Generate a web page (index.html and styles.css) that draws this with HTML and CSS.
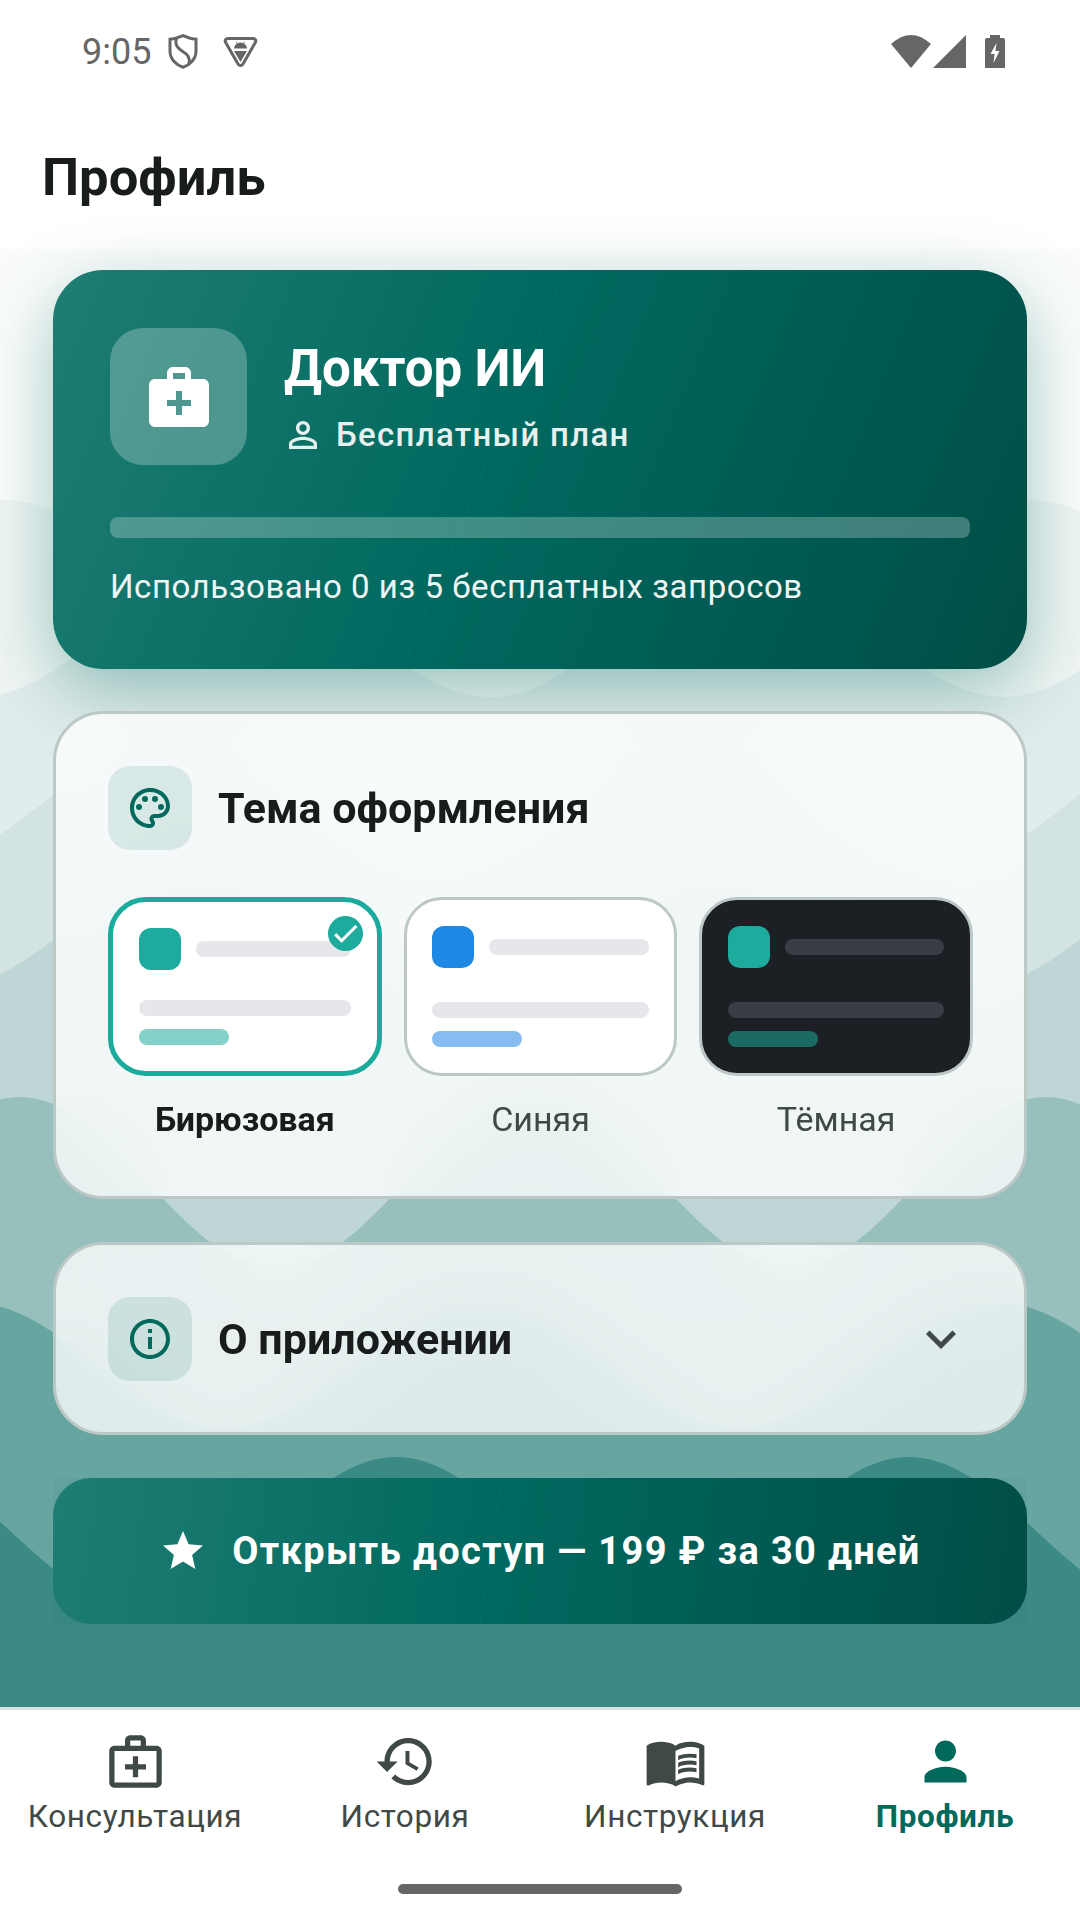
FILE: index.html
```html
<!doctype html>
<html lang="ru">

<head>
    <meta charset="utf-8">
    <title>Профиль</title>
    <link rel="stylesheet" href="styles.css">
</head>

<body>
    <div class="screen">
        <!-- status bar -->
        <div class="status">
            <span class="time">9:05</span>
            <svg class="st-shield" viewBox="0 0 30 35" fill="none" stroke="#666" stroke-width="3">
                <path d="M15 1.7C20 4 24.500 5 28 5.200V17C28 25 22 31 15 33.300 8 31 2 25 2 17V5.200C5.500 5 10 4 15 1.700Z" />
                <path d="M8.500 4C6.500 10 9 14 14 17S22.500 23 21 30" />
            </svg>
            <svg class="st-fdroid" viewBox="0 0 35 32" fill="#666">
                <path d="M5 2.500H30C32.500 2.500 33.500 4.500 32.300 6.500L20 28C18.800 30 16.200 30 15 28L2.700 6.500C1.500 4.500 2.500 2.500 5 2.500Z" fill="none" stroke="#666" stroke-width="3" />
                <path d="M11 12.500a6.500 6 0 0 1 13 0zM13 5l1.500 2-1 .6zM22 5l-1.500 2 1 .6zM11 15h13l-6.500 11z" />
            </svg>
            <span class="st-space"></span>
            <svg class="st-wifi" viewBox="0 0 40 33" fill="#666"><path d="M0 9Q20-9 40 9L20 33z" /></svg>
            <svg class="st-signal" viewBox="0 0 33 33" fill="#666"><path d="M33 0V33H0z" /></svg>
            <svg class="st-battery" viewBox="0 0 20 33">
                <path fill="#666" d="M5 0h10v3h3a2 2 0 0 1 2 2v28H0V5a2 2 0 0 1 2-2h3z" />
                <path fill="#fff" d="M11.500 8 5.500 19H9.500L8.500 28 14.500 16H10.500z" />
            </svg>
        </div>

        <h1 class="page-title">Профиль</h1>

        <main class="content">
            <!-- background waves, light to dark -->
            <svg class="waves" viewBox="0 249 1080 1458" preserveAspectRatio="none">
                <path class="w1" d="M-508 500c93.400 0 163 130 256.500 130s163-130 256.500-130 163 130 256.500 130 163-130 256.500-130 163 130 256.500 130 163-130 256.500-130 163 130 256.500 130 163-130 256.500-130V1707H-508z" />
                <path class="w2" d="M-279 566c93.400 0 163 131 256.500 131s163-131 256.500-131 163 131 256.500 131 163-131 256.500-131 163 131 256.500 131 163-131 256.500-131 163 131 256.500 131 163-131 256.500-131V1707H-279z" />
                <path class="w3" d="M-334.500 732c93.400 0 163 130 256.500 130s163-130 256.500-130 163 130 256.500 130 163-130 256.500-130 163 130 256.500 130 163-130 256.500-130 163 130 256.500 130 163-130 256.500-130V1707H-334.500z" />
                <path class="w4" d="M-308.500 857c93.400 0 163 130 256.500 130s163-130 256.500-130 163 130 256.500 130 163-130 256.500-130 163 130 256.500 130 163-130 256.500-130 163 130 256.500 130 163-130 256.500-130V1707H-308.500z" />
                <path class="w5" d="M-493 1097c93.400 0 163 172 256.500 172s163-172 256.500-172 163 172 256.500 172 163-172 256.500-172 163 172 256.500 172 163-172 256.500-172 163 172 256.500 172 163-172 256.500-172V1707H-493z" />
                <path class="w6" d="M-31 1302c93.400 0 163 125 256.500 125s163-125 256.500-125 163 125 256.500 125 163-125 256.500-125 163 125 256.500 125 163-125 256.500-125V1707H-31z" />
                <path class="w7" d="M-117 1457c93.400 0 163 150 256.500 150s163-150 256.500-150 163 150 256.500 150 163-150 256.500-150 163 150 256.500 150 163-150 256.500-150V1707H-117z" />
            </svg>

            <!-- plan card -->
            <section class="plan">
                <div class="plan-top">
                    <div class="plan-tile">
                        <svg class="plan-bag" viewBox="0 0 24 24" fill="#fff"><path fill-rule="evenodd" d="M20 6h-4V4c0-1.100-.9-2-2-2h-4c-1.100 0-2 .9-2 2v2H4c-1.100 0-2 .9-2 2v12c0 1.100.9 2 2 2h16c1.100 0 2-.9 2-2V8c0-1.100-.9-2-2-2zM10 4h4v2h-4V4zm6 11h-3v3h-2v-3H8v-2h3v-3h2v3h3v2z" /></svg>
                    </div>
                    <div class="plan-info">
                        <div class="plan-name">Доктор ИИ</div>
                        <div class="plan-sub">
                            <svg class="plan-person" viewBox="0 0 24 24" fill="#e6f0ef"><path d="M12 5.900c1.160 0 2.100.94 2.100 2.100s-.94 2.100-2.100 2.100S9.900 9.160 9.900 8s.94-2.100 2.100-2.100m0 9c2.970 0 6.100 1.460 6.100 2.100v1.100H5.900V17c0-.64 3.130-2.100 6.100-2.100M12 4C9.790 4 8 5.790 8 8s1.790 4 4 4 4-1.790 4-4-1.790-4-4-4zm0 9c-2.670 0-8 1.340-8 4v3h16v-3c0-2.660-5.330-4-8-4z" /></svg>
                            <span>Бесплатный план</span>
                        </div>
                    </div>
                </div>
                <div class="plan-bar"></div>
                <div class="plan-used">Использовано 0 из 5 бесплатных запросов</div>
            </section>

            <!-- theme -->
            <section class="card theme">
                <div class="card-head">
                    <div class="tile">
                        <svg class="tile-icon" viewBox="0 0 24 24" fill="#00695c">
                            <path d="M12 22C6.490 22 2 17.510 2 12S6.490 2 12 2s10 4.040 10 9c0 3.310-2.690 6-6 6h-1.770c-.28 0-.5.22-.5.5 0 .12.05.23.13.33.41.47.64 1.060.64 1.670 0 1.380-1.120 2.500-2.500 2.500zm0-18c-4.410 0-8 3.590-8 8s3.590 8 8 8c.28 0 .5-.22.5-.5 0-.16-.08-.28-.14-.35-.41-.46-.63-1.050-.63-1.650 0-1.380 1.120-2.500 2.500-2.500H16c2.210 0 4-1.790 4-4 0-3.860-3.590-7-8-7z" />
                            <circle cx="6.500" cy="11.500" r="1.500" />
                            <circle cx="9.500" cy="7.500" r="1.500" />
                            <circle cx="14.500" cy="7.500" r="1.500" />
                            <circle cx="17.500" cy="11.500" r="1.500" />
                        </svg>
                    </div>
                    <h2 class="card-title">Тема оформления</h2>
                </div>
                <div class="options">
                    <div class="opt">
                        <div class="preview teal selected">
                            <div class="pv-row"><span class="pv-tile"></span><span class="pv-bar"></span></div>
                            <span class="pv-bar pv-long"></span>
                            <span class="pv-bar pv-short"></span>
                            <span class="check"><svg viewBox="0 0 24 24" fill="#fff" stroke="#fff" stroke-width="0.5"><path d="M9 16.170 4.830 12l-1.420 1.410L9 19 21 7l-1.410-1.410z" /></svg></span>
                        </div>
                        <div class="opt-label active">Бирюзовая</div>
                    </div>
                    <div class="opt">
                        <div class="preview blue">
                            <div class="pv-row"><span class="pv-tile"></span><span class="pv-bar"></span></div>
                            <span class="pv-bar pv-long"></span>
                            <span class="pv-bar pv-short"></span>
                        </div>
                        <div class="opt-label">Синяя</div>
                    </div>
                    <div class="opt">
                        <div class="preview dark">
                            <div class="pv-row"><span class="pv-tile"></span><span class="pv-bar"></span></div>
                            <span class="pv-bar pv-long"></span>
                            <span class="pv-bar pv-short"></span>
                        </div>
                        <div class="opt-label">Тёмная</div>
                    </div>
                </div>
            </section>

            <!-- about -->
            <section class="card about">
                <div class="tile">
                    <svg class="tile-icon" viewBox="0 0 24 24" fill="#00695c"><path d="M11 7h2v2h-2zm0 4h2v6h-2zm1-9C6.480 2 2 6.480 2 12s4.480 10 10 10 10-4.480 10-10S17.520 2 12 2zm0 18c-4.410 0-8-3.590-8-8s3.590-8 8-8 8 3.590 8 8-3.590 8-8 8z" /></svg>
                </div>
                <h2 class="card-title">О приложении</h2>
                <svg class="chevron" viewBox="0 0 24 24" fill="#3f4947"><path d="M16.590 8.590 12 13.170 7.410 8.590 6 10l6 6 6-6z" /></svg>
            </section>

            <!-- buy -->
            <div class="buy-wrap">
                <button class="buy">
                    <svg class="buy-star" viewBox="0 0 24 24" fill="#fff"><path d="M12 17.270 18.180 21l-1.640-7.030L22 9.240l-7.190-.61L12 2 9.190 8.630 2 9.240l5.460 4.730L5.820 21z" /></svg>
                    <span>Открыть доступ — 199 ₽ за 30 дней</span>
                </button>
            </div>
        </main>

        <!-- bottom navigation -->
        <nav class="nav">
            <div class="nav-items">
                <div class="nav-item">
                    <svg viewBox="0 0 24 24"><path d="M20 6h-4V4c0-1.100-.9-2-2-2h-4c-1.100 0-2 .9-2 2v2H4c-1.100 0-2 .9-2 2v12c0 1.100.9 2 2 2h16c1.100 0 2-.9 2-2V8c0-1.100-.9-2-2-2zM10 4h4v2h-4V4zm10 16H4V8h16v12z" /><path d="M13 10h-2v3H8v2h3v3h2v-3h3v-2h-3z" /></svg>
                    <span>Консультация</span>
                </div>
                <div class="nav-item">
                    <svg viewBox="0 0 24 24"><path d="M13 3c-4.970 0-9 4.030-9 9H1l3.890 3.890.07.14L9 12H6c0-3.870 3.130-7 7-7s7 3.130 7 7-3.130 7-7 7c-1.930 0-3.680-.79-4.940-2.060l-1.420 1.420C8.270 19.990 10.510 21 13 21c4.970 0 9-4.030 9-9s-4.030-9-9-9zm-1 5v5l4.280 2.540.72-1.210-3.500-2.080V8H12z" /></svg>
                    <span>История</span>
                </div>
                <div class="nav-item">
                    <svg viewBox="0 0 24 24"><path d="M21 5c-1.110-.35-2.330-.5-3.500-.5-1.950 0-4.050.4-5.500 1.500-1.450-1.100-3.550-1.500-5.500-1.500S2.450 4.900 1 6v14.650c0 .25.25.5.5.5.1 0 .15-.05.25-.05C3.100 20.450 5.050 20 6.500 20c1.950 0 4.050.4 5.500 1.500 1.350-.85 3.800-1.500 5.500-1.500 1.650 0 3.350.3 4.750 1.050.1.05.15.05.25.05.25 0 .5-.25.5-.5V6c-.6-.45-1.250-.75-2-1zm0 13.500c-1.100-.35-2.300-.5-3.500-.5-1.700 0-4.150.65-5.500 1.500V8c1.350-.85 3.800-1.500 5.500-1.500 1.200 0 2.400.15 3.500.5v11.500z" /><path d="M17.500 10.500c.88 0 1.730.09 2.500.26V9.240c-.79-.15-1.640-.24-2.500-.24-1.700 0-3.240.29-4.500.83v1.660c1.130-.64 2.700-.99 4.500-.99zM13 12.490v1.660c1.130-.64 2.700-.99 4.500-.99.88 0 1.730.09 2.500.26V11.900c-.79-.15-1.640-.24-2.500-.24-1.700 0-3.240.3-4.500.83zm4.500 1.840c-1.700 0-3.240.29-4.500.83v1.660c1.130-.64 2.700-.99 4.500-.99.88 0 1.730.09 2.500.26v-1.520c-.79-.16-1.640-.24-2.500-.24z" /></svg>
                    <span>Инструкция</span>
                </div>
                <div class="nav-item current">
                    <svg viewBox="0 0 24 24"><path d="M12 12c2.210 0 4-1.790 4-4s-1.790-4-4-4-4 1.790-4 4 1.790 4 4 4zm0 2c-2.670 0-8 1.340-8 4v2h16v-2c0-2.660-5.330-4-8-4z" /></svg>
                    <span>Профиль</span>
                </div>
            </div>
            <div class="home-bar"></div>
        </nav>
    </div>
</body>

</html>
```
FILE: styles.css
```css
* {
    box-sizing: border-box;
}

body {
    margin: 0;
    background: #fff;
    font-family: Roboto, "Noto Sans", sans-serif;
    color: #191c1c;
}

.screen {
    width: 1080px;
    height: 1920px;
    display: flex;
    flex-direction: column;
    overflow: hidden;
}

/* status bar */
.status {
    height: 103px;
    flex: none;
    display: flex;
    align-items: center;
    padding: 0 75px 0 82px;
}

.time {
    font-size: 36px;
    color: #666;
    width: 86px;
}

.st-shield {
    width: 30px;
    height: 35px;
}

.st-fdroid {
    width: 35px;
    height: 32px;
    margin-left: 25px;
}

.st-space {
    flex: 1;
}

.st-wifi {
    width: 40px;
    height: 33px;
}

.st-signal {
    width: 33px;
    height: 33px;
    margin-left: 2px;
}

.st-battery {
    width: 20px;
    height: 33px;
    margin-left: 19px;
}

/* header */
.page-title {
    flex: none;
    height: 146px;
    margin: 0;
    padding: 44px 0 0 42px;
    font-size: 52.500px;
    line-height: 60px;
    font-weight: 700;
}

/* content */
.content {
    flex: 1;
    position: relative;
    background: #fafcfc;
    padding: 21px 53px 0;
    display: flex;
    flex-direction: column;
}

.waves {
    position: absolute;
    left: 0;
    top: 0;
    width: 100%;
    height: 100%;
}

.w1 { fill: #eff5f4; }
.w2 { fill: #e1ecec; }
.w3 { fill: #d2e3e2; }
.w4 { fill: #bed6d6; }
.w5 { fill: #97bfbc; }
.w6 { fill: #67a5a0; }
.w7 { fill: #3b8a85; }

/* plan card */
.plan {
    position: relative;
    height: 399px;
    padding: 58px 57px 0;
    border-radius: 50px;
    color: #fff;
    background-image: linear-gradient(112.2deg, #1f7d73 0%, #00695f 45%, #076e64 45.05%, #00695f 45.15%, #004d47 100%);
    box-shadow: 0 22px 70px rgba(0, 105, 92, 0.36);
}

.plan-top {
    display: flex;
    gap: 37px;
}

.plan-tile {
    width: 137px;
    height: 137px;
    border-radius: 33px;
    background-color: rgba(255, 255, 255, 0.25);
    display: flex;
    align-items: center;
    justify-content: center;
}

.plan-bag {
    width: 72px;
    height: 72px;
}

.plan-info {
    padding-top: 11px;
}

.plan-name {
    font-size: 51px;
    line-height: 60px;
    font-weight: 700;
}

.plan-sub {
    display: flex;
    align-items: center;
    gap: 12px;
    margin-top: 14px;
    margin-left: -2px;
    font-size: 33px;
    line-height: 44px;
    font-weight: 500;
    letter-spacing: 1.3px;
    color: #e6f0ef;
}

.plan-person {
    width: 42px;
    height: 42px;
}

.plan-bar {
    height: 21px;
    margin-top: 52px;
    border-radius: 8px;
    background-color: rgba(255, 255, 255, 0.25);
}

.plan-used {
    margin-top: 27px;
    font-size: 33px;
    line-height: 44px;
    letter-spacing: 0.55px;
    color: #eef5f4;
}

/* cards */
.card {
    position: relative;
    border: 3px solid #bcc8c6;
    border-radius: 50px;
    background-color: rgba(255, 255, 255, 0.78);
    backdrop-filter: blur(30px);
}

.theme {
    margin-top: 42px;
    height: 488px;
    padding: 52px 51px 0 52px;
}

.about {
    margin-top: 43px;
    height: 193px;
    padding: 0 53px 0 52px;
    display: flex;
    align-items: center;
    gap: 26px;
}

.card-head {
    display: flex;
    align-items: center;
    gap: 26px;
}

.tile {
    flex: none;
    width: 84px;
    height: 84px;
    border-radius: 22px;
    background-color: rgba(0, 105, 92, 0.12);
    display: flex;
    align-items: center;
    justify-content: center;
}

.tile-icon {
    width: 48px;
    height: 48px;
}

.card-title {
    margin: 0;
    font-size: 43px;
    line-height: 52px;
    font-weight: 700;
}

.chevron {
    width: 60px;
    height: 60px;
    margin-left: auto;
}

/* theme options */
.options {
    display: grid;
    grid-template-columns: repeat(3, 1fr);
    gap: 22px;
    margin-top: 47px;
}

.preview {
    position: relative;
    height: 179px;
    padding: 26px 25.500px;
    border: 3px solid #bcc8c6;
    border-radius: 38px;
    background-color: #fff;
    display: flex;
    flex-direction: column;
}

.preview.selected {
    border: 5.500px solid #1aab9d;
}

.pv-row {
    display: flex;
    align-items: center;
    gap: 15px;
}

.pv-tile {
    flex: none;
    width: 42px;
    height: 42px;
    border-radius: 12px;
}

.pv-bar {
    display: block;
    flex: 1;
    height: 16px;
    border-radius: 8px;
    background-color: #e6e7eb;
}

.pv-long {
    flex: none;
    margin-top: auto;
}

.pv-short {
    flex: none;
    width: 90px;
    margin-top: 13px;
}

.teal .pv-tile { background-color: #1cab9d; }
.teal .pv-short { background-color: #83d1c8; }
.blue .pv-tile { background-color: #1e88e5; }
.blue .pv-short { background-color: #85bdf1; }
.dark { background-color: #1c1f24; }
.dark .pv-tile { background-color: #1cab9d; }
.dark .pv-bar { background-color: #3a3d45; }
.dark .pv-short { background-color: #1c6a64; }

.check {
    position: absolute;
    top: 13.500px;
    right: 13.500px;
    width: 35px;
    height: 35px;
    border-radius: 50%;
    background-color: #1cab9d;
    display: flex;
    align-items: center;
    justify-content: center;
}

.check svg {
    width: 31px;
    height: 31px;
}

.opt-label {
    margin-top: 21px;
    text-align: center;
    font-size: 34px;
    line-height: 44px;
    color: #3f4947;
}

.opt-label.active {
    font-weight: 700;
    color: #191c1c;
}

/* buy button */
.buy-wrap {
    position: relative;
    margin-top: 43px;
    background-color: rgba(0, 77, 64, 0.04);
}

.buy {
    width: 100%;
    height: 146px;
    border: 0;
    border-radius: 38px;
    padding: 0;
    display: flex;
    align-items: center;
    justify-content: center;
    gap: 25px;
    font-family: inherit;
    font-size: 38px;
    font-weight: 700;
    letter-spacing: 1.35px;
    color: #fff;
    background-image: linear-gradient(98.500deg, #1f7d73 0%, #00695f 45%, #076e64 45.05%, #00695f 45.15%, #004d47 100%);
}

.buy-star {
    width: 48px;
    height: 48px;
}

/* bottom navigation */
.nav {
    flex: none;
    height: 213px;
    border-top: 3px solid #d9e3e1;
    background-color: #fff;
}

.nav-items {
    display: flex;
    padding-top: 20px;
}

.nav-item {
    flex: 1;
    display: flex;
    flex-direction: column;
    align-items: center;
    gap: 4px;
    font-size: 31.500px;
    line-height: 40px;
    letter-spacing: 0.6px;
    color: #3f4947;
}

.nav-item svg {
    width: 63px;
    height: 63px;
    fill: #3f4947;
}

.nav-item.current {
    font-weight: 700;
    color: #00695c;
}

.nav-item.current svg {
    fill: #00695c;
}

.home-bar {
    width: 284px;
    height: 10px;
    margin: 47px auto 0;
    border-radius: 5px;
    background-color: #666;
}
```
